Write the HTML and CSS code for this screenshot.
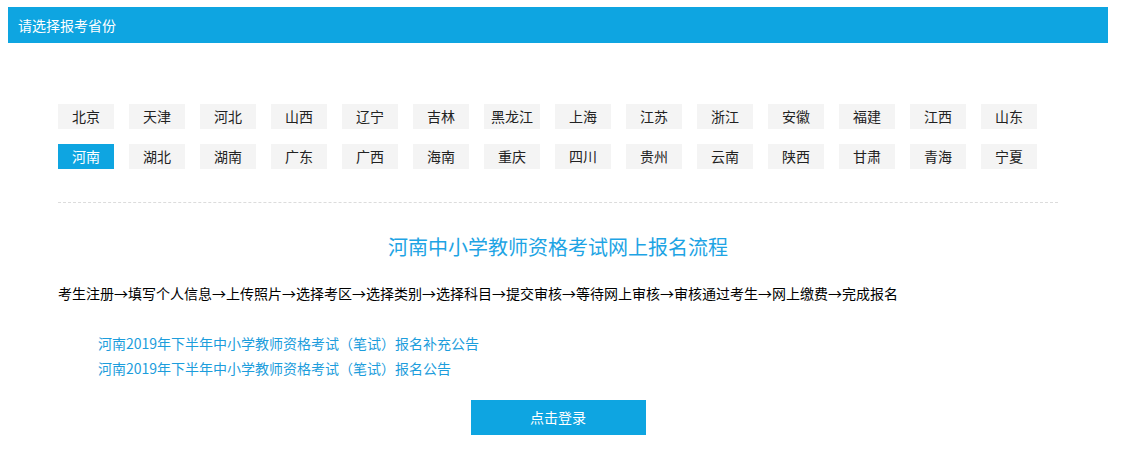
FILE: index.html
```html
<!DOCTYPE html>
<html lang="zh-CN">

<head>
    <meta charset="UTF-8">
    <meta name="viewport" content="width=device-width, initial-scale=1.0">
    <title>请选择报考省份</title>
    <link rel="stylesheet" href="styles.css">
</head>

<body>
    <div class="wrap">
        <div class="head">请选择报考省份</div>

        <div class="main">
            <div class="provinces">
                <a class="prov">北京</a>
                <a class="prov">天津</a>
                <a class="prov">河北</a>
                <a class="prov">山西</a>
                <a class="prov">辽宁</a>
                <a class="prov">吉林</a>
                <a class="prov">黑龙江</a>
                <a class="prov">上海</a>
                <a class="prov">江苏</a>
                <a class="prov">浙江</a>
                <a class="prov">安徽</a>
                <a class="prov">福建</a>
                <a class="prov">江西</a>
                <a class="prov">山东</a>
                <a class="prov active">河南</a>
                <a class="prov">湖北</a>
                <a class="prov">湖南</a>
                <a class="prov">广东</a>
                <a class="prov">广西</a>
                <a class="prov">海南</a>
                <a class="prov">重庆</a>
                <a class="prov">四川</a>
                <a class="prov">贵州</a>
                <a class="prov">云南</a>
                <a class="prov">陕西</a>
                <a class="prov">甘肃</a>
                <a class="prov">青海</a>
                <a class="prov">宁夏</a>
            </div>

            <div class="detail">
                <h2 class="title">河南中小学教师资格考试网上报名流程</h2>
                <p class="flow">考生注册→填写个人信息→上传照片→选择考区→选择类别→选择科目→提交审核→等待网上审核→审核通过考生→网上缴费→完成报名</p>

                <ul class="notices">
                    <li><a href="#">河南2019年下半年中小学教师资格考试（笔试）报名补充公告</a></li>
                    <li><a href="#">河南2019年下半年中小学教师资格考试（笔试）报名公告</a></li>
                </ul>

                <div class="login-row">
                    <a class="login" href="#">点击登录</a>
                </div>
            </div>
        </div>
    </div>
</body>

</html>
```

FILE: styles.css
```css
body {
    margin: 0;
    padding: 0;
    font-family: "Noto Sans CJK SC", "Microsoft YaHei", sans-serif;
    font-size: 14px;
    color: #000;
    background-color: #fff;
}

a {
    text-decoration: none;
}

.wrap {
    width: 1100px;
    margin: 7px 0 0 8px;
}

.head {
    height: 36px;
    line-height: 36px;
    padding-left: 10px;
    background-color: #0ea5e1;
    color: #fff;
    font-size: 14px;
}

.main {
    width: 1000px;
    margin: 0 auto;
}

.provinces {
    display: grid;
    grid-template-columns: repeat(14, 56px);
    column-gap: 15px;
    row-gap: 15px;
    margin-top: 61px;
    padding-bottom: 33px;
    border-bottom: 1px dashed #dcdcdc;
}

.prov {
    height: 25px;
    line-height: 25px;
    text-align: center;
    background-color: #f4f4f4;
    color: #222;
    cursor: pointer;
}

.prov.active {
    background-color: #0ea5e1;
    color: #fff;
}

.title {
    margin: 29px 0 0;
    font-size: 20px;
    font-weight: normal;
    line-height: 30px;
    text-align: center;
    color: #1ea4e4;
}

.flow {
    margin: 21px 0 0;
    line-height: 20px;
}

.notices {
    list-style: none;
    margin: 28px 0 0;
    padding-left: 40px;
}

.notices li {
    line-height: 25px;
}

.notices a {
    color: #1c9ddc;
}

.login-row {
    display: flex;
    justify-content: center;
    margin-top: 19px;
}

.login {
    display: block;
    width: 175px;
    height: 35px;
    line-height: 35px;
    text-align: center;
    background-color: #0ea5e1;
    color: #fff;
}
```
